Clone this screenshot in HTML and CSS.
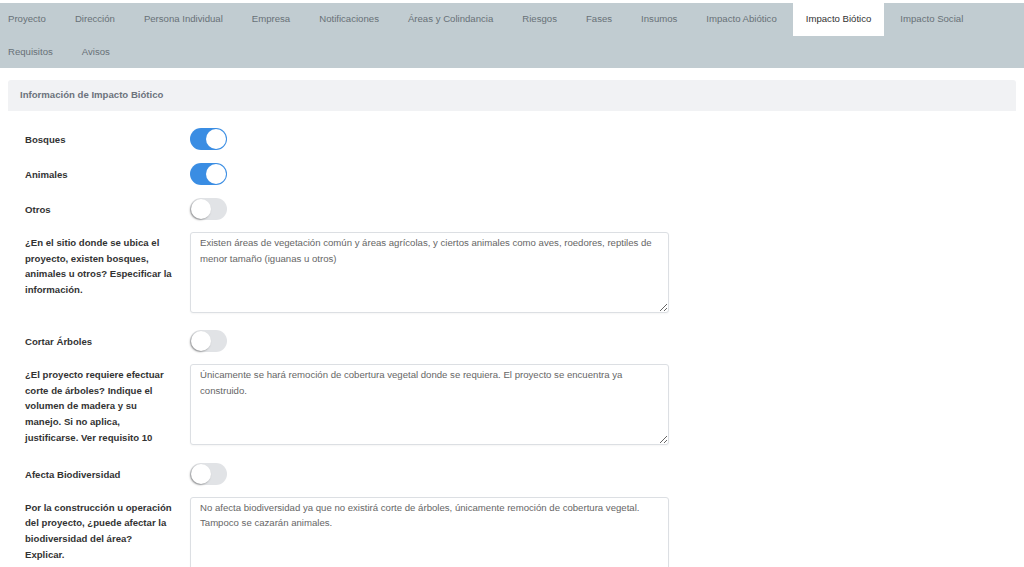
FILE: index.html
```html
<!DOCTYPE html>
<html lang="es">

<head>
  <meta charset="UTF-8">
  <meta name="viewport" content="width=device-width, initial-scale=1.0">
  <title>Impacto Biótico</title>
  <link rel="stylesheet" href="styles.css">
</head>

<body>
  <nav class="tabs">
    <div class="tab-list">
      <a class="tab">Proyecto</a>
      <a class="tab">Dirección</a>
      <a class="tab">Persona Individual</a>
      <a class="tab">Empresa</a>
      <a class="tab">Notificaciones</a>
      <a class="tab">Áreas y Colindancia</a>
      <a class="tab">Riesgos</a>
      <a class="tab">Fases</a>
      <a class="tab">Insumos</a>
      <a class="tab">Impacto Abiótico</a>
      <a class="tab active">Impacto Biótico</a>
      <a class="tab">Impacto Social</a>
      <a class="tab">Requisitos</a>
      <a class="tab">Avisos</a>
    </div>
  </nav>

  <div class="panel">
    <div class="panel-heading">Información de Impacto Biótico</div>
    <div class="panel-body">
      <div class="row switch-row">
        <label>Bosques</label>
        <span class="switch on"></span>
      </div>
      <div class="row switch-row">
        <label>Animales</label>
        <span class="switch on"></span>
      </div>
      <div class="row switch-row">
        <label>Otros</label>
        <span class="switch"></span>
      </div>
      <div class="row text-row">
        <label>¿En el sitio donde se ubica el proyecto, existen bosques, animales u otros? Especificar la información.</label>
        <textarea>Existen áreas de vegetación común y áreas agrícolas, y ciertos animales como aves, roedores, reptiles de menor tamaño (iguanas u otros)</textarea>
      </div>
      <div class="row switch-row">
        <label>Cortar Árboles</label>
        <span class="switch"></span>
      </div>
      <div class="row text-row">
        <label>¿El proyecto requiere efectuar corte de árboles? Indique el volumen de madera y su manejo. Si no aplica, justificarse. Ver requisito 10</label>
        <textarea>Únicamente se hará remoción de cobertura vegetal donde se requiera. El proyecto se encuentra ya construido.</textarea>
      </div>
      <div class="row switch-row">
        <label>Afecta Biodiversidad</label>
        <span class="switch"></span>
      </div>
      <div class="row text-row">
        <label>Por la construcción u operación del proyecto, ¿puede afectar la biodiversidad del área? Explicar.</label>
        <textarea>No afecta biodiversidad ya que no existirá corte de árboles, únicamente remoción de cobertura vegetal. Tampoco se cazarán animales.</textarea>
      </div>
    </div>
  </div>
</body>

</html>
```

FILE: styles.css
```css
body {
  margin: 0;
  font-family: "Liberation Sans", Arial, sans-serif;
  font-size: 9.6px;
  color: #333;
  background: #fff;
}

.tabs {
  margin-top: 3px;
  background: #c1ccd1;
}

.tab-list {
  display: flex;
  flex-wrap: wrap;
  margin-left: -4.5px;
}

.tab {
  display: block;
  padding: 0 12.5px;
  margin-right: 4px;
  line-height: 32.5px;
  color: #687177;
  white-space: nowrap;
}

.tab.active {
  background: #fff;
  color: #333;
}

.panel {
  margin: 12px 8px 0;
}

.panel-heading {
  height: 31px;
  line-height: 30px;
  padding-left: 12px;
  background: #f1f2f4;
  border-radius: 3px 3px 0 0;
  color: #6c737c;
  font-weight: bold;
}

.panel-body {
  padding: 17px 0 0 17px;
}

.row {
  display: grid;
  grid-template-columns: 165px 479px;
}

.row label {
  font-weight: bold;
  color: #333;
  line-height: 15.7px;
  padding-right: 17px;
}

.switch-row {
  height: 22px;
  align-items: center;
  margin-bottom: 13px;
}

.switch-row label {
  padding-top: 2px;
}

.text-row {
  align-items: start;
  margin-top: -1px;
  margin-bottom: 17px;
}

.text-row label {
  padding-top: 3px;
}

.switch {
  position: relative;
  width: 37px;
  height: 22px;
  border-radius: 11px;
  background: #e1e3e6;
}

.switch::after {
  content: "";
  position: absolute;
  top: 1px;
  left: 1px;
  width: 20px;
  height: 20px;
  border-radius: 50%;
  background: #fff;
  box-shadow: -1px 1px 2px rgba(0, 0, 0, 0.35);
}

.switch.on {
  background: #3a8de3;
}

.switch.on::after {
  left: 16px;
  box-shadow: none;
}

textarea {
  box-sizing: border-box;
  width: 479px;
  height: 81px;
  margin: 0;
  padding: 2px 9px;
  border: 1px solid #dcdfe3;
  border-radius: 3px;
  font-family: "Liberation Sans", Arial, sans-serif;
  font-size: 9.6px;
  line-height: 15.8px;
  color: #666;
  box-shadow: 0 1px 2px rgba(0, 0, 0, 0.04);
}
```
